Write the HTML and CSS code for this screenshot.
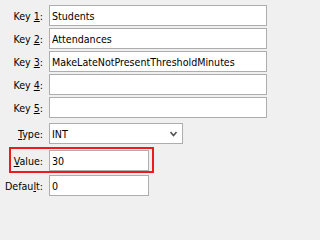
FILE: index.html
```html
<!DOCTYPE html>
<html>
<head>
<meta charset="utf-8">
<link rel="stylesheet" href="styles.css">
</head>
<body>
<div class="form">
  <div class="row"><label class="lbl">Key <u>1</u>:</label><div class="field wide">Students</div></div>
  <div class="row"><label class="lbl">Key <u>2</u>:</label><div class="field wide">Attendances</div></div>
  <div class="row"><label class="lbl">Key <u>3</u>:</label><div class="field wide">MakeLateNotPresentThresholdMinutes</div></div>
  <div class="row"><label class="lbl">Key <u>4</u>:</label><div class="field wide"></div></div>
  <div class="row"><label class="lbl">Key <u>5</u>:</label><div class="field wide"></div></div>
  <div class="row type-row"><label class="lbl"><u>T</u>ype:</label><div class="field combo"><span>INT</span><svg class="chev" width="7" height="6" viewBox="0 0 7 6"><path d="M0.5 1 L3.5 4.5 L6.5 1" fill="none" stroke="#555" stroke-width="1.6"/></svg></div></div>
  <div class="highlight"><div class="row"><label class="lbl short"><u>V</u>alue:</label><div class="field narrow">30</div></div></div>
  <div class="row default-row"><label class="lbl">Defau<u>l</u>t:</label><div class="field narrow">0</div></div>
</div>
</body>
</html>
```
FILE: styles.css
```css
html, body {
  margin: 0;
  padding: 0;
  background: #f0f0f0;
}
body {
  font-family: "DejaVu Sans Condensed", "DejaVu Sans", sans-serif;
  font-size: 10.6px;
  color: #000;
}
.form {
  display: flex;
  flex-direction: column;
  padding-top: 5px;
}
.row {
  display: flex;
  align-items: center;
  gap: 6px;
  margin-bottom: 2px;
}
.lbl {
  width: 43px;
  text-align: right;
  white-space: nowrap;
}
.lbl.short {
  width: 31px;
}
.field {
  box-sizing: border-box;
  height: 21px;
  border: 1px solid #adadad;
  background: #fff;
  padding: 0 2px;
  display: flex;
  align-items: center;
  white-space: nowrap;
}
.wide { width: 218px; }
.combo {
  width: 134px;
  justify-content: space-between;
  padding-right: 5px;
}
.chev { display: block; }
.narrow { width: 100px; }
.type-row {
  margin-top: 3px;
  margin-bottom: 0;
}
.highlight {
  align-self: flex-start;
  margin-left: 9px;
  margin-top: 3px;
  border: 2px solid #ec1c1c;
  padding: 1px 3px 0 1px;
}
.highlight .row {
  margin-bottom: 0;
}
.default-row {
  margin-top: 2px;
}
```
